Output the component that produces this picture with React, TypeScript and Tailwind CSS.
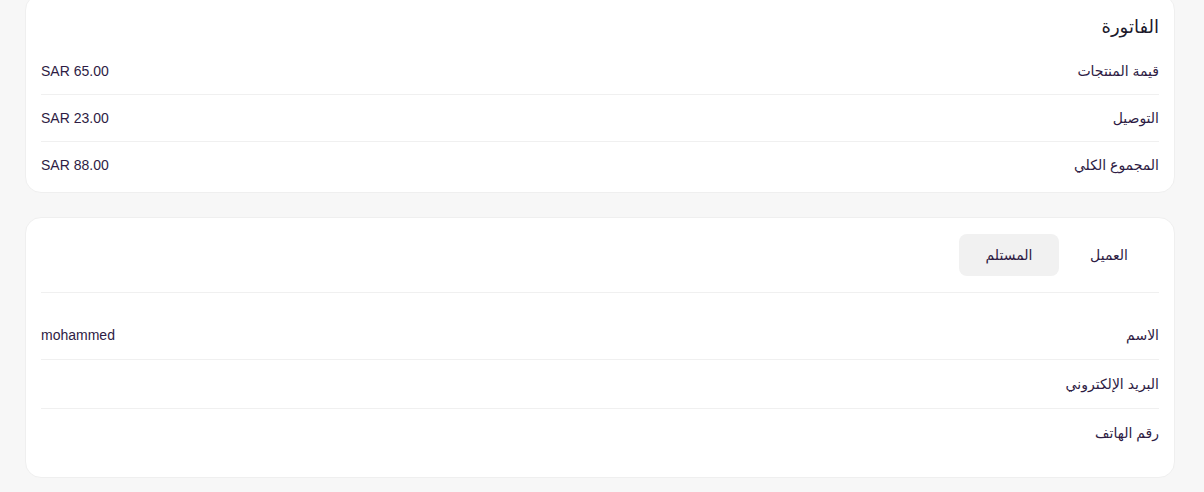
const invoiceRows = [
  { label: "قيمة المنتجات", value: "SAR 65.00" },
  { label: "التوصيل", value: "SAR 23.00" },
  { label: "المجموع الكلي", value: "SAR 88.00" },
]

const contactRows = [
  { label: "الاسم", value: "mohammed" },
  { label: "البريد الإلكتروني", value: "" },
  { label: "رقم الهاتف", value: "" },
]

const font = "font-['Liberation_Sans','DejaVu_Sans',sans-serif]"

export default function App() {
  return (
    <main
      dir="rtl"
      className={`h-[492px] overflow-hidden bg-[#f7f7f7] pl-[25px] pr-[29px] text-[#2e1c44] ${font}`}
    >
      <section className="-mt-[6px] rounded-2xl border border-[#efefef] bg-white px-[15px] pb-[3px] pt-[18px]">
        <h2 className="h-[28px] text-[18px] leading-[28px] text-[#1c1a2b]">الفاتورة</h2>
        <div className="mt-[7px]">
          {invoiceRows.map((row, i) => (
            <div
              key={row.label}
              className={`flex h-[47px] items-center justify-between text-[14px] ${
                i < invoiceRows.length - 1 ? "border-b border-[#f0f0f0]" : ""
              }`}
            >
              <span>{row.label}</span>
              <span dir="ltr">{row.value}</span>
            </div>
          ))}
        </div>
      </section>

      <section className="mt-[24px] rounded-2xl border border-[#efefef] bg-white px-[15px] pb-[19px] pt-[16px]">
        <div className="flex border-b border-[#f0f0f0] pb-[16px]">
          <button className="h-[42px] w-[100px] rounded-lg text-[14px]">العميل</button>
          <button className="h-[42px] w-[100px] rounded-lg bg-[#f1f1f1] text-[14px]">المستلم</button>
        </div>
        <div className="mt-[18px]">
          {contactRows.map((row, i) => (
            <div
              key={row.label}
              className={`flex h-[49px] items-center justify-between text-[14px] ${
                i < contactRows.length - 1 ? "border-b border-[#f0f0f0]" : ""
              }`}
            >
              <span>{row.label}</span>
              <span dir="ltr">{row.value}</span>
            </div>
          ))}
        </div>
      </section>
    </main>
  )
}
